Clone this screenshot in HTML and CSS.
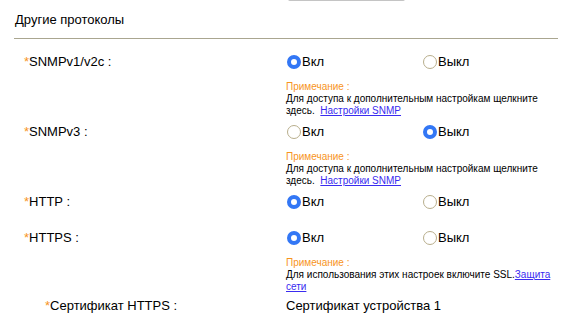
FILE: index.html
```html
<!DOCTYPE html>
<html lang="ru">
<head>
    <meta charset="UTF-8">
    <title>Другие протоколы</title>
    <link rel="stylesheet" href="styles.css">
</head>
<body>

<div class="top-button"></div>

<div class="section">
    <div class="section-title">Другие протоколы</div>

    <div class="row">
        <div class="label"><span class="req">*</span>SNMPv1/v2c :</div>
        <div class="value">
            <div class="options">
                <label class="option"><span class="radio checked"></span>Вкл</label>
                <label class="option"><span class="radio"></span>Выкл</label>
            </div>
            <div class="note">
                <div class="note-title">Примечание :</div>
                Для доступа к дополнительным настройкам щелкните здесь.&nbsp; <a href="#">Настройки SNMP</a>
            </div>
        </div>
    </div>

    <div class="row">
        <div class="label"><span class="req">*</span>SNMPv3 :</div>
        <div class="value">
            <div class="options">
                <label class="option"><span class="radio"></span>Вкл</label>
                <label class="option"><span class="radio checked"></span>Выкл</label>
            </div>
            <div class="note">
                <div class="note-title">Примечание :</div>
                Для доступа к дополнительным настройкам щелкните здесь.&nbsp; <a href="#">Настройки SNMP</a>
            </div>
        </div>
    </div>

    <div class="row">
        <div class="label"><span class="req">*</span>HTTP :</div>
        <div class="value">
            <div class="options">
                <label class="option"><span class="radio checked"></span>Вкл</label>
                <label class="option"><span class="radio"></span>Выкл</label>
            </div>
        </div>
    </div>

    <div class="row">
        <div class="label"><span class="req">*</span>HTTPS :</div>
        <div class="value">
            <div class="options">
                <label class="option"><span class="radio checked"></span>Вкл</label>
                <label class="option"><span class="radio"></span>Выкл</label>
            </div>
            <div class="note">
                <div class="note-title">Примечание :</div>
                Для использования этих настроек включите SSL.<a href="#">Защита сети</a>
            </div>
        </div>
    </div>

    <div class="row sub">
        <div class="label"><span class="req">*</span>Сертификат HTTPS :</div>
        <div class="value">Сертификат устройства 1</div>
    </div>
</div>

</body>
</html>
```

FILE: styles.css
```css
body {
    margin: 0;
    font-family: "Liberation Sans", Arial, sans-serif;
    font-size: 13px;
    color: #000;
    background: #fff;
}

.top-button {
    margin-left: 288px;
    width: 117px;
    height: 2px;
    border-bottom: 1px solid #c4c4c4;
    border-radius: 0 0 4px 4px;
    box-sizing: border-box;
    margin-top: -1px;
}

.section {
    padding: 0 18px 0 14px;
}

.section-title {
    padding: 11px 0 0 1px;
    height: 26px;
    border-bottom: 1px solid #aaa690;
}

.row {
    display: flex;
    padding: 15px 0 5px;
}

.label {
    flex: none;
    width: 262px;
    padding-left: 10px;
    line-height: 16px;
}

.req {
    color: #f7941d;
}

.value {
    flex: 1;
    line-height: 16px;
}

.options {
    display: flex;
}

.option {
    display: flex;
    align-items: center;
    width: 136px;
}

.radio {
    width: 14px;
    height: 14px;
    border-radius: 50%;
    box-sizing: border-box;
    border: 1.5px solid #b8ae8c;
    background: #fff;
    margin-left: 1px;
    margin-right: 1px;
}

.radio.checked {
    border: 4.5px solid #3377f5;
    background: #fff;
}

.note {
    margin-top: 11px;
    margin-bottom: -13px;
    font-size: 10px;
    line-height: 12px;
    width: 270px;
}

.note-title {
    color: #f7941d;
}

.note a {
    color: #3a2cf0;
}

.row.sub {
    padding-top: 13px;
}

.row.sub .label {
    padding-left: 31px;
    width: 241px;
}
```
